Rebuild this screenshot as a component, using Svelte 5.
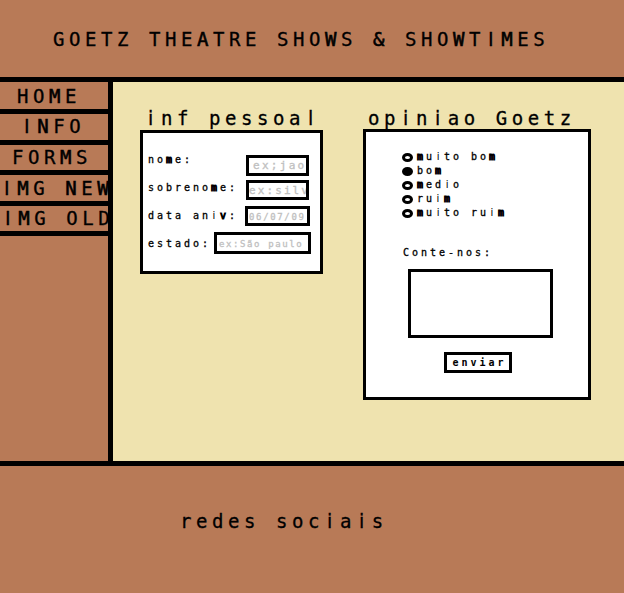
<script>
  const links = [
    { label: 'HOME', height: 32, indent: 17, line: 29 },
    { label: 'INFO', height: 31, indent: 21, line: 24 },
    { label: 'FORMS', height: 30, indent: 12, line: 25 },
    { label: 'IMG NEW', height: 31, indent: 1, line: 26 },
    { label: 'IMG OLD', height: 30, indent: 2, line: 25 }
  ];
  const ratings = ['muito bom', 'bom', 'medio', 'ruim', 'muito ruim'];
  let chosen = $state('bom');

  // Narrow stems lose their serifs; dense letters get a heavier stroke.
  const split = (text) => text.split(/([Iil]|[mvMWNA&])/).filter(Boolean);
  const kind = (part) => (/^[Iil]$/.test(part) ? 'stem' : /^[mvMWNA&]$/.test(part) ? 'heavy' : '');
</script>

{#snippet type(text)}{#each split(text) as part}{#if kind(part)}<span class={kind(part)}>{part}</span>{:else}{part}{/if}{/each}{/snippet}

<div class="page">
  <header><h1>{@render type('GOETZ THEATRE SHOWS & SHOWTIMES')}</h1></header>
  <div class="middle">
    <nav>
      {#each links as link}
        <a style="height: {link.height}px; padding-left: {link.indent}px; line-height: {link.line}px">{@render type(link.label)}</a>
      {/each}
    </nav>
    <main>
      <section class="personal">
        <h2>{@render type('inf pessoal')}</h2>
        <form class="card">
          <div class="row"><label for="nome">{@render type('nome:')}</label><input id="nome" placeholder="ex;jao" /></div>
          <div class="row"><label for="sobrenome">{@render type('sobrenome:')}</label><input id="sobrenome" placeholder="ex:silva" /></div>
          <div class="row"><label for="data">{@render type('data aniv:')}</label><input id="data" placeholder="06/07/09" /></div>
          <div class="row"><label for="estado">{@render type('estado:')}</label><input id="estado" placeholder="ex:São paulo" /></div>
        </form>
      </section>
      <section class="opinion">
        <h2>{@render type('opiniao Goetz')}</h2>
        <form class="card">
          <div class="ratings">
            {#each ratings as rating}
              <label>
                <input type="radio" name="rating" value={rating} bind:group={chosen} />
                <span>{@render type(rating)}</span>
              </label>
            {/each}
          </div>
          <label class="tell" for="tell">{@render type('Conte-nos:')}</label>
          <textarea id="tell"></textarea>
          <button type="button">enviar</button>
        </form>
      </section>
    </main>
  </div>
  <footer><p>{@render type('redes sociais')}</p></footer>
</div>

<style>
  :global(body) { margin: 0; }
  .page, .page * { box-sizing: border-box; }
  .page {
    display: flex;
    flex-direction: column;
    width: 624px;
    height: 593px;
    overflow: hidden;
    color: #000;
    background: #b87a57;
    font-family: "DejaVu Sans Mono", monospace;
  }
  h1, h2, p, nav a {
    margin: 0;
    font-size: 19px;
    line-height: 24px;
    font-weight: 400;
    letter-spacing: 4.56px;
    white-space: pre;
    -webkit-text-stroke: 0.3px #000;
  }
  .stem { margin: 0 0.16em; font-family: "DejaVu Sans", sans-serif; }
  .heavy { -webkit-text-stroke: 0.6px #000; }
  header { height: 82px; padding: 27px 0 0 53px; border-bottom: 5px solid #000; }
  .middle { display: flex; height: 384px; border-bottom: 5px solid #000; }
  nav { width: 113px; border-right: 5px solid #000; overflow: hidden; }
  nav a { display: block; border-bottom: 5px solid #000; }
  main { display: flex; flex: 1; background: #efe3af; }
  .card { border: 3px solid #000; background: #fff; font-size: 10px; letter-spacing: 2.98px; }
  label, .tell { font-size: 10px; line-height: 28px; -webkit-text-stroke: 0.3px #000; white-space: pre; }

  .personal { width: 183px; margin: 24px 0 0 27px; }
  .personal h2 { padding-left: 5px; line-height: 24px; height: 24px; }
  .personal .card { height: 144px; padding: 13px 0 0 5px; }
  .row { display: flex; justify-content: space-between; height: 28px; padding-right: 11px; }
  input:not([type='radio']), textarea, button {
    margin: 0;
    padding: 0;
    border: 3px solid #000;
    border-radius: 0;
    background: #fff;
    outline: 0;
    font-family: inherit;
    letter-spacing: inherit;
  }
  input::placeholder { color: #c0c0c0; opacity: 1; -webkit-text-stroke: 0.3px #c0c0c0; }
  .row #nome { width: 63px; height: 21px; margin-top: 9px; padding-left: 4px; font-size: 11px; letter-spacing: 2.3px; }
  .row #sobrenome { width: 63px; height: 20px; margin-top: 6px; padding-top: 1px; font-size: 11px; letter-spacing: 2.1px; }
  .row #data { width: 65px; height: 20px; margin: 4px -1px 0 0; padding: 1px 0 0 1px; font-size: 9px; letter-spacing: 1.65px; }
  .row #estado { width: 97px; height: 22px; margin: 2px -2px 0 0; padding: 1px 0 0 2px; font-size: 9px; letter-spacing: 1.6px; }

  .opinion { width: 228px; margin: 24px 0 0 40px; }
  .opinion h2 { height: 23px; padding-left: 5px; line-height: 25px; }
  .opinion .card { display: flex; flex-direction: column; height: 271px; padding: 18px 0 0 36px; }
  .ratings { display: flex; flex-direction: column; }
  .ratings label { display: flex; align-items: center; height: 14px; line-height: 14px; }
  .ratings input {
    appearance: none;
    width: 11px;
    height: 9px;
    margin: 1px 4px 0 0;
    border: 3px solid #000;
    border-radius: 50%;
    background: #fff;
  }
  .ratings input:checked { background: #000; }
  label .heavy { -webkit-text-stroke: 1px #000; }
  label .stem { -webkit-text-stroke: 0; }
  .tell { height: 28px; margin-top: 19px; padding-left: 1px; }
  textarea { width: 145px; height: 69px; margin: 2px 0 0 6px; resize: none; }
  button { width: 68px; height: 21px; margin: 14px 0 0 42px; padding-left: 3px; color: #000; font-size: 10px; font-weight: 700; line-height: 15px; }
  footer { flex: 1; padding: 43px 0 0 180px; }
</style>
